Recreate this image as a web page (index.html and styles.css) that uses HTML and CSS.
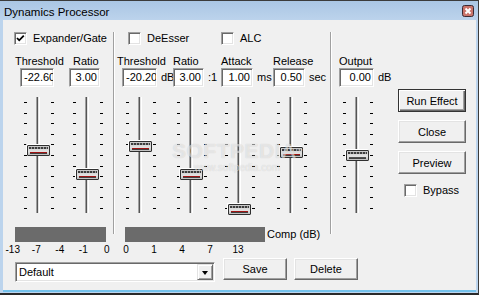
FILE: index.html
```html
<!DOCTYPE html>
<html>
<head>
    <title>Dynamics Processor</title>
    <link rel="stylesheet" href="styles.css">
</head>
<body>
<div class="window">
    <div class="titlebar">
        <span class="title">Dynamics Processor</span>
        <div class="close">
            <svg width="12" height="12" viewBox="0 0 12 12">
                <rect x="0.5" y="0.5" width="11" height="11" rx="2" fill="#c9736a" stroke="#3b2a33"/>
                <path d="M3.5 3.5 L8.5 8.5 M8.5 3.5 L3.5 8.5" stroke="#fff" stroke-width="2"/>
            </svg>
        </div>
    </div>

    <div class="client">
        <div class="main">
            <!-- expander / gate -->
            <div class="section gate">
                <div class="checkrow">
                    <div class="check">
                        <span class="box"><svg width="11" height="11" viewBox="0 0 11 11"><path d="M2 5 L4.2 7.3 L8.8 2.6" fill="none" stroke="#000" stroke-width="1.8"/></svg></span>
                        Expander/Gate
                    </div>
                </div>
                <div class="channels">
                    <div class="ch">
                        <div class="label out">Threshold</div>
                        <div class="fieldrow"><div class="field">-22.60</div></div>
                        <div class="slider" data-pos="48"></div>
                    </div>
                    <div class="ch">
                        <div class="label in">Ratio</div>
                        <div class="fieldrow"><div class="field narrow">3.00</div></div>
                        <div class="slider" data-pos="72"></div>
                    </div>
                </div>
                <div class="meterrow">
                    <div class="meter"></div>
                </div>
                <div class="scale">
                    <span>-13</span><span>-7</span><span>-4</span><span>-1</span><span>0</span>
                </div>
            </div>

            <div class="sep"></div>

            <!-- compressor -->
            <div class="section comp">
                <div class="checkrow">
                    <div class="check deesser"><span class="box"></span>DeEsser</div>
                    <div class="check"><span class="box"></span>ALC</div>
                </div>
                <div class="channels">
                    <div class="ch">
                        <div class="label out">Threshold</div>
                        <div class="fieldrow"><div class="field wide">-20.20</div><span class="unit">dB</span></div>
                        <div class="slider" data-pos="44"></div>
                    </div>
                    <div class="ch">
                        <div class="label">Ratio</div>
                        <div class="fieldrow"><div class="field narrow">3.00</div><span class="unit">:1</span></div>
                        <div class="slider" data-pos="72"></div>
                    </div>
                    <div class="ch">
                        <div class="label">Attack</div>
                        <div class="fieldrow"><div class="field mid">1.00</div><span class="unit">ms</span></div>
                        <div class="slider" data-pos="107"></div>
                    </div>
                    <div class="ch">
                        <div class="label">Release</div>
                        <div class="fieldrow"><div class="field mid">0.50</div><span class="unit">sec</span></div>
                        <div class="slider" data-pos="50"></div>
                    </div>
                </div>
                <div class="meterrow">
                    <div class="meter"></div>
                    <span class="meterlabel">Comp (dB)</span>
                </div>
                <div class="scale">
                    <span>0</span><span>1</span><span>4</span><span>7</span><span>13</span>
                </div>
            </div>

            <div class="sep"></div>

            <!-- output -->
            <div class="section output">
                <div class="ch">
                    <div class="label">Output</div>
                    <div class="fieldrow"><div class="field wide">0.00</div><span class="unit">dB</span></div>
                    <div class="slider plain" data-pos="53"></div>
                </div>
            </div>

            <div class="actions">
                <div class="btn default">Run Effect</div>
                <div class="btn">Close</div>
                <div class="btn">Preview</div>
                <div class="check bypass"><span class="box"></span>Bypass</div>
            </div>
        </div>

        <div class="bottom">
            <div class="combo">
                <div class="combotext">Default</div>
                <div class="arrow"><span></span></div>
            </div>
            <div class="btn small">Save</div>
            <div class="btn small">Delete</div>
        </div>
    </div>

    <div class="watermark">SOFTPEDIA<sup>™</sup><small>www.softpedia.com</small></div>
</div>

<script>
    // build ticks, channel and thumb for every slider
    function makeTicks() {
        const col = document.createElement('div');
        col.className = 'ticks';
        for (let i = 0; i < 11; i++) {
            col.appendChild(document.createElement('i'));
        }
        return col;
    }

    document.querySelectorAll('.slider').forEach(el => {
        const track = document.createElement('div');
        track.className = 'track';
        const thumb = document.createElement('div');
        thumb.className = 'thumb';
        thumb.style.top = el.dataset.pos + 'px';
        track.appendChild(thumb);
        el.append(makeTicks(), track, makeTicks());
    });
</script>
</body>
</html>
```

FILE: styles.css
```css
body {
    margin: 0;
    font-family: "Liberation Sans", Arial, sans-serif;
    font-size: 11px;
    color: #000;
    background: #fff;
}

.window {
    position: relative;
    width: 479px;
    height: 295px;
    box-sizing: border-box;
    display: flex;
    flex-direction: column;
    background: #bcd4ed;
    border-top: 1px solid #3b3b3b;
    border-right: 1px solid #3b3b3b;
    border-bottom: 2px solid #2a2a2a;
}

/* title bar */
.titlebar {
    height: 19px;
    display: flex;
    align-items: center;
    padding-left: 4px;
    background: linear-gradient(#aac6e4, #bcd3ec);
}

.title {
    font-size: 11.5px;
    padding-top: 2px;
}

.close {
    margin-left: auto;
    margin-right: 4px;
    align-self: flex-start;
    margin-top: 4px;
    height: 12px;
}

.close svg {
    display: block;
}

.client {
    flex: 1;
    margin: 0 2px 3px 3px;
    background: #f0f0f0;
    padding: 12px 0 0 11px;
    box-shadow: 0 2px 0 #74c2ec;
}

.main {
    display: flex;
    align-items: flex-start;
    height: 226px;
}

.section {
    flex: none;
}

.gate {
    width: 96px;
}

.comp {
    width: 211px;
    margin-left: 2px;
}

.output {
    width: 52px;
    margin-left: 7px;
    padding-top: 23px;
}

.sep {
    flex: none;
    width: 2px;
    height: 202px;
    margin-left: 3px;
    box-sizing: border-box;
    border-left: 1px solid #a0a0a0;
    border-right: 1px solid #fff;
}

.comp + .sep {
    margin-left: 2px;
}

/* check boxes */
.checkrow {
    display: flex;
    height: 13px;
}

.comp .checkrow {
    padding-left: 11px;
}

.check {
    display: flex;
    align-items: center;
    height: 13px;
    line-height: 13px;
    white-space: nowrap;
}

.check.deesser {
    width: 93px;
}

.box {
    width: 13px;
    height: 13px;
    box-sizing: border-box;
    margin-right: 6px;
    background: #fff;
    border: 1px solid;
    border-color: #a0a0a0 #fff #fff #a0a0a0;
    box-shadow: inset 1px 1px #696969, inset -1px -1px #e3e3e3;
    display: flex;
    align-items: center;
    justify-content: center;
}

.box svg {
    display: block;
}

/* channel columns */
.channels {
    display: flex;
    margin-top: 10px;
}

.gate .channels {
    padding-left: 6px;
}

.comp .channels {
    padding-left: 5px;
}

.ch {
    flex: none;
    display: flex;
    flex-direction: column;
    align-items: flex-start;
}

.gate .ch:nth-child(1) { width: 49px; }
.gate .ch:nth-child(2) { width: 41px; }
.comp .ch:nth-child(1) { width: 51px; }
.comp .ch:nth-child(2) { width: 48px; }
.comp .ch:nth-child(3) { width: 52px; }

.label {
    height: 13px;
    line-height: 13px;
    white-space: nowrap;
}

.label.out {
    margin-left: -5px;
}

.label.in {
    margin-left: 4px;
}

.fieldrow {
    display: flex;
    white-space: nowrap;
}

.field {
    width: 34px;
    height: 19px;
    box-sizing: border-box;
    padding: 0 2px 0 3px;
    background: #fff;
    border: 1px solid;
    border-color: #a0a0a0 #fff #fff #a0a0a0;
    box-shadow: inset 1px 1px #696969, inset -1px -1px #e3e3e3;
    line-height: 17px;
    text-align: right;
    overflow: hidden;
    white-space: nowrap;
}

.field.wide { width: 35px; }
.field.mid { width: 32px; }
.field.narrow { width: 31px; }

.unit {
    margin-left: 4px;
    line-height: 19px;
}

/* sliders */
.slider {
    display: flex;
    height: 116px;
    margin-top: 10px;
    padding-left: 4px;
}

.ticks {
    display: flex;
    flex-direction: column;
    justify-content: space-between;
    width: 3px;
    padding: 5px 0 4px;
    box-sizing: border-box;
}

.ticks i {
    display: block;
    height: 1px;
    background: #000;
}

.track {
    position: relative;
    width: 4px;
    margin: 0 11px 0 9px;
    background: linear-gradient(90deg, #a0a0a0 0 1px, #555 1px 2px, #e3e3e3 2px 3px, #fff 3px 4px);
}

.thumb {
    position: absolute;
    left: -9px;
    width: 23px;
    height: 11px;
    box-sizing: border-box;
    border: 1px solid #2f2f2f;
    border-radius: 1px;
    background: linear-gradient(#c8c8c8, #e2e2e2 60%, #bdbdbd);
    box-shadow: -1px -1px 0 #fff;
}

.thumb::before {
    content: "";
    position: absolute;
    left: 1px;
    right: 1px;
    top: 1px;
    height: 2px;
    background: repeating-linear-gradient(90deg, #3c3c3c 0 2px, #9a9a9a 2px 3px);
}

.thumb::after {
    content: "";
    position: absolute;
    left: 2px;
    right: 2px;
    bottom: 2px;
    height: 1px;
    background: #a01414;
    box-shadow: 0 1px 0 #404040;
}

.plain .thumb::after {
    background: #505050;
}

/* meters */
.meterrow {
    display: flex;
    height: 15px;
    margin-top: 14px;
    line-height: 15px;
}

.meter {
    height: 15px;
    background: #6b6b6b;
}

.gate .meter {
    width: 91px;
    margin-left: 1px;
}

.comp .meter {
    width: 140px;
    margin-left: 8px;
}

.meterlabel {
    margin-left: 2px;
    white-space: nowrap;
}

.scale {
    display: flex;
    height: 12px;
    margin-top: 2px;
    font-size: 10px;
    line-height: 12px;
}

.scale span {
    flex: none;
    text-align: center;
}

.gate .scale {
    margin-left: -13px;
}

.gate .scale span {
    width: 23.5px;
}

.comp .scale {
    margin-left: -5px;
}

.comp .scale span {
    width: 28px;
}

/* buttons */
.actions {
    flex: none;
    display: flex;
    flex-direction: column;
    gap: 8px;
    margin-left: 7px;
    margin-top: 57px;
}

.btn {
    width: 68px;
    height: 23px;
    box-sizing: border-box;
    display: flex;
    align-items: center;
    justify-content: center;
    background: #f0f0f0;
    border: 1px solid;
    border-color: #fff #696969 #696969 #fff;
    box-shadow: inset -1px -1px #a0a0a0, inset 1px 1px #e3e3e3;
    white-space: nowrap;
}

.btn.default {
    border-color: #333;
    box-shadow: inset 1px 1px #fff, inset -1px -1px #696969, inset -2px -2px #a0a0a0;
}

.btn.small {
    width: 64px;
    height: 22px;
    margin-left: 7px;
}

.combo + .btn {
    margin-left: 8px;
}

.bypass {
    margin-top: 2px;
    padding-left: 6px;
}

/* bottom row */
.bottom {
    display: flex;
    align-items: flex-start;
}

.combo {
    display: flex;
    width: 200px;
    height: 20px;
    margin-left: 1px;
    margin-top: 4px;
    box-sizing: border-box;
    background: #fff;
    border: 1px solid;
    border-color: #a0a0a0 #fff #fff #a0a0a0;
    box-shadow: inset 1px 1px #696969, inset -1px -1px #e3e3e3;
    padding: 1px;
}

.combotext {
    flex: 1;
    padding-left: 2px;
    line-height: 16px;
}

.arrow {
    width: 16px;
    height: 16px;
    box-sizing: border-box;
    display: flex;
    align-items: center;
    justify-content: center;
    background: #f0f0f0;
    border: 1px solid;
    border-color: #e3e3e3 #696969 #696969 #e3e3e3;
    box-shadow: inset 1px 1px #fff, inset -1px -1px #a0a0a0;
}

.arrow span {
    width: 0;
    height: 0;
    border-top: 4px solid #000;
    border-left: 3.5px solid transparent;
    border-right: 3.5px solid transparent;
    margin-top: 1px;
}

/* softpedia watermark over the sliders */
.watermark {
    position: absolute;
    left: 172px;
    top: 139px;
    width: 130px;
    font-size: 21px;
    font-weight: bold;
    letter-spacing: 0.5px;
    color: rgba(255, 255, 255, 0.55);
    text-shadow: 0 0 1px rgba(0, 0, 0, 0.18);
    line-height: 22px;
    text-align: center;
}

.watermark sup {
    font-size: 6px;
    vertical-align: top;
}

.watermark small {
    display: block;
    font-size: 10px;
    font-weight: normal;
    line-height: 12px;
    letter-spacing: 0;
}
```
